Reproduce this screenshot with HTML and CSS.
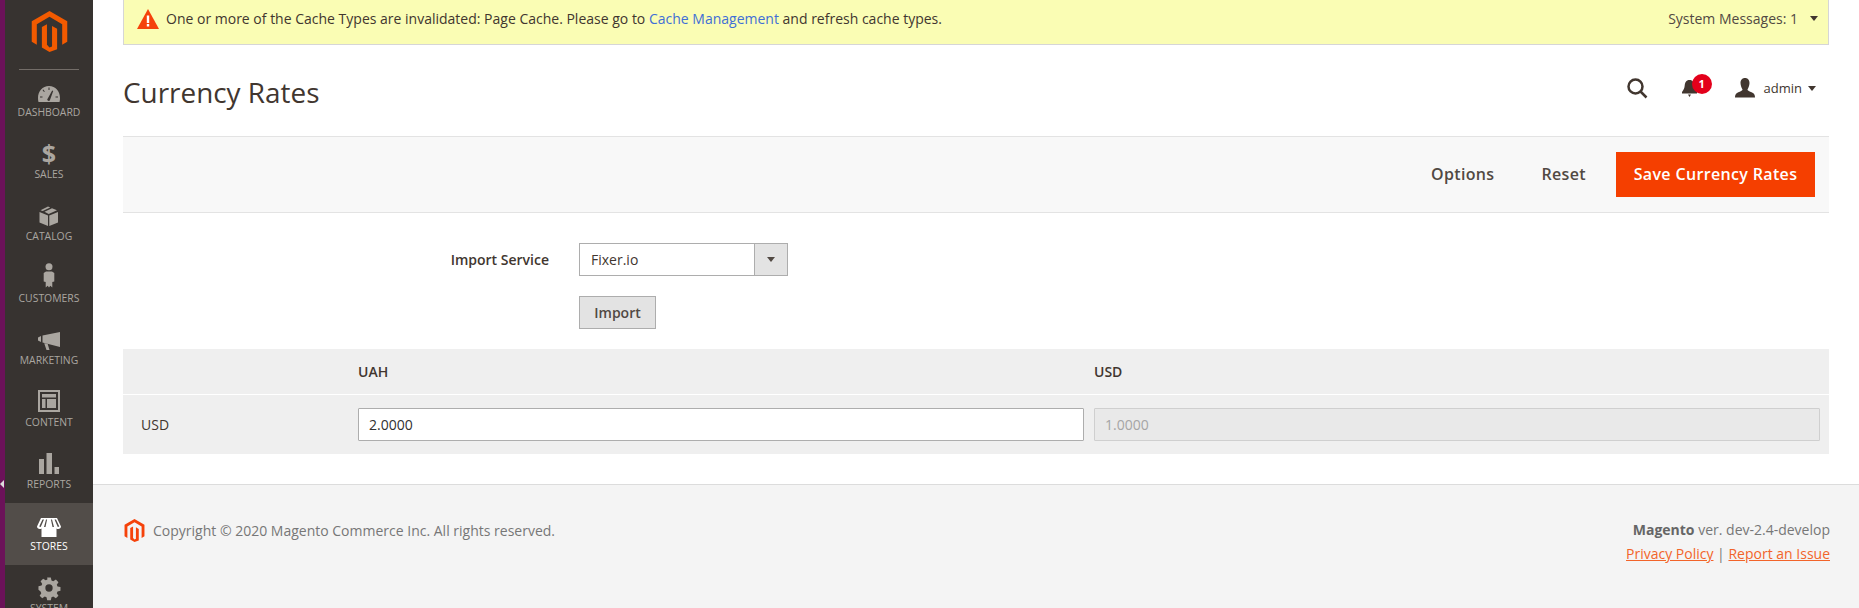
FILE: index.html
```html
<!DOCTYPE html>
<html lang="en">
<head>
<meta charset="utf-8">
<title>Currency Rates</title>
<link rel="stylesheet" href="styles.css">
</head>
<body>
<div class="strip"><span class="strip-arrow"></span></div>
<nav class="sidebar">
  <div class="logo">
    <svg class="logo-icon" viewBox="0 0 24 24"><path d="M12 24l-4.455-2.572v-12l2.97-1.715v12.001L12 21.43l1.485-.716V8.713l2.97 1.715v12L12 24zM22.391 6v12l-2.969 1.714V7.713L12 3.43 4.574 7.713v12.001L1.609 18V6L12 0l10.391 6z"/></svg>
  </div>
  <ul class="menu">
    <li class="menu-item">
      <svg class="nav-icon" viewBox="0 0 24 24"><path fill-rule="evenodd" d="M12 7C5.500 7 1 12 1 19c0 1.500.2 3 .5 4h21c.3-1 .5-2.500.5-4 0-7-4.500-12-11-12zM10.200 20.500l5-9 1 .5-3.400 9.500a1.600 1.600 0 0 1-2.600-1zM11.500 8.500h1V11h-1zM5.500 11l.8-.6 1.500 2-.8.6zM3 17.500h2.500v1H3zM18.500 17.500H21v1h-2.500z"/></svg>
      <span>Dashboard</span>
    </li>
    <li class="menu-item">
      <span class="dollar">$</span>
      <span>Sales</span>
    </li>
    <li class="menu-item">
      <svg class="nav-icon" viewBox="0 0 24 24"><path d="M2.500 9l8.500 3.500V23l-8.500-3.500zM21 9l-8.700 3.500V23l8.700-3.500zM3.500 7.200L11 3.500l2.200 1L5.700 8.100zM7.500 8.800L15 5.300l5 2-8.300 3.600z"/></svg>
      <span>Catalog</span>
    </li>
    <li class="menu-item">
      <svg class="nav-icon" viewBox="0 0 24 24"><circle cx="12" cy="1.800" r="3.500"/><path d="M9 6.500h6l2.300 1.500v8.500l-2 .5v5.500l-2-1.800-1.300 1.800-1.300-1.800-2 1.800V17l-2-.5V8z"/></svg>
      <span>Customers</span>
    </li>
    <li class="menu-item">
      <svg class="nav-icon" viewBox="0 0 24 24"><path d="M1 10.500l3-1.500v6l-3-1.500zM5.500 8.500L23 5v15L5.500 15.500zM7.200 16.200l3.500.8L12.500 23h-3z"/></svg>
      <span>Marketing</span>
    </li>
    <li class="menu-item">
      <svg class="nav-icon" viewBox="0 0 24 24"><path fill-rule="evenodd" d="M1 1h22v22H1zM3 3v18h18V3zM5 5h14v3.500H5zM5 10h3.500v9H5zM10 10h9v9h-9z"/></svg>
      <span>Content</span>
    </li>
    <li class="menu-item">
      <svg class="nav-icon" viewBox="0 0 24 24"><path d="M2 8h5v15H2zM9.500 2h5.500v21H9.500zM17.500 16H22v7h-4.500z"/></svg>
      <span>Reports</span>
    </li>
    <li class="menu-item is-active">
      <svg class="nav-icon" viewBox="0 0 24 24"><path fill-rule="evenodd" d="M4 5h16l4 8.500c0 1.500-1.300 2.500-2.700 2.500-.8 0-1.400-.2-1.800-.6V24h-15v-8.600c-.4.400-1 .6-1.800.6C1.300 16 0 15 0 13.500zM5.500 6.500l-3.300 7 1.500.5 3.300-7.500zM9 6.500l-2 7.500h1.500l1.600-7.500zM13.900 6.500l1.600 7.500H17l-2-7.500zM17.500 6.500l3.300 7.500 1.500-.5-3.300-7z"/></svg>
      <span>Stores</span>
    </li>
    <li class="menu-item">
      <svg class="nav-icon" viewBox="0 0 24 24"><path transform="translate(1 2) scale(.917)" fill-rule="evenodd" d="M10 .5h4l.7 3.300 1.900.8 2.900-1.800 2.800 2.800-1.800 2.900.8 1.900 3.200.6v4l-3.200.7-.8 1.900 1.800 2.800-2.800 2.800-2.900-1.800-1.900.8-.7 3.200h-4l-.7-3.200-1.900-.8-2.800 1.800-2.800-2.800 1.800-2.800-.8-1.900L.5 14v-4l3.300-.6.800-1.900-1.800-2.900 2.800-2.800 2.800 1.800 1.900-.8zM12 8a4 4 0 1 0 0 8 4 4 0 0 0 0-8z"/></svg>
      <span>System</span>
    </li>
  </ul>
</nav>
<div class="main">
  <div class="message">
    <div class="message-text">
      <svg class="warn" viewBox="0 0 22 20"><path d="M11 0l11 20H0z"/><rect class="warn-mark" x="9.800" y="6.500" width="2.400" height="7.500"/><rect class="warn-mark" x="9.800" y="15" width="2.400" height="2.500"/></svg>
      <span>One or more of the Cache Types are invalidated: Page Cache. Please go to <a class="msg-link" href="#">Cache Management</a> and refresh cache types.</span>
    </div>
    <div class="message-toggle">System Messages: 1<span class="caret"></span></div>
  </div>
  <header class="page-head">
    <h1 class="title">Currency Rates</h1>
    <div class="head-actions">
      <svg class="search" viewBox="0 0 21 21"><circle cx="8.500" cy="8.500" r="7" /><path d="M13.500 13.500l6 6"/></svg>
      <div class="bell-wrap">
        <svg class="bell" viewBox="0 0 16 18"><path d="M8 1c3.500 0 4.500 2.500 4.800 5.500.2 2.500.8 4 2.700 6.500v1.500H.5V13c1.900-2.500 2.500-4 2.700-6.500C3.500 3.500 4.500 1 8 1zM6.500 15.500h3L8 18z"/></svg>
        <span class="badge">1</span>
      </div>
      <div class="user">
        <svg class="user-icon" viewBox="0 0 20 20"><path d="M10 0c3 0 4.500 2.300 4.500 5S13 10.500 12.500 11.500c0 1.500 3 2 5.500 3.500 1.300.8 2 2.500 2 4.500H0c0-2 .7-3.700 2-4.500 2.500-1.500 5.500-2 5.500-3.500C7 10.500 5.500 7.700 5.500 5S7 0 10 0z"/></svg>
        <span class="user-name">admin</span>
        <span class="caret"></span>
      </div>
    </div>
  </header>
  <div class="action-bar">
    <button class="action" type="button">Options</button>
    <button class="action" type="button">Reset</button>
    <button class="action primary" type="button">Save Currency Rates</button>
  </div>
  <form class="import-form">
    <div class="form-row">
      <label class="form-label">Import Service</label>
      <div class="select"><span class="select-value">Fixer.io</span><span class="select-arrow"><span class="caret small"></span></span></div>
    </div>
    <div class="form-row import-row">
      <span class="form-label"></span>
      <button class="import-btn" type="button">Import</button>
    </div>
  </form>
  <div class="rates">
    <div class="rates-row head">
      <span></span><span>UAH</span><span>USD</span>
    </div>
    <div class="rates-row body">
      <span class="cur">USD</span>
      <input class="rate-input" type="text" value="2.0000">
      <input class="rate-input disabled" type="text" value="1.0000" disabled>
    </div>
  </div>
  <footer class="footer">
    <div class="copyright">
      <svg class="foot-logo" viewBox="0 0 24 24"><path d="M12 24l-4.455-2.572v-12l2.97-1.715v12.001L12 21.43l1.485-.716V8.713l2.97 1.715v12L12 24zM22.391 6v12l-2.969 1.714V7.713L12 3.430 4.574 7.713v12.001L1.609 18V6L12 0l10.391 6z"/></svg>
      <span>Copyright © 2020 Magento Commerce Inc. All rights reserved.</span>
    </div>
    <div class="foot-right">
      <div><strong>Magento</strong> ver. dev-2.4-develop</div>
      <div class="foot-links"><a href="#">Privacy Policy</a> <span class="sep">|</span> <a href="#">Report an Issue</a></div>
    </div>
  </footer>
</div>
</body>
</html>
```
FILE: styles.css
```css
* { box-sizing: border-box; }
html, body { height: 608px; }
body {
  margin: 0;
  display: flex;
  overflow: hidden;
  font-family: "Open Sans", sans-serif;
  font-size: 14px;
  color: #41362f;
  background: #fff;
}
.strip {
  width: 5px;
  flex: none;
  background: #6b1259;
  position: relative;
}
.strip-arrow {
  position: absolute;
  left: 0;
  top: 480px;
  border: 4px solid transparent;
  border-left: 0;
  border-right: 4px solid #ddd;
}
.sidebar {
  width: 88px;
  flex: none;
  background: #373330;
  height: 608px;
  overflow: hidden;
  color: #aaa6a0;
}
.logo {
  height: 69px;
  padding-top: 11px;
  display: flex;
  justify-content: center;
  align-items: flex-start;
  position: relative;
}
.logo::after {
  content: "";
  position: absolute;
  left: 14px;
  right: 14px;
  top: 69px;
  height: 1px;
  background: #736d68;
}
.logo-icon { width: 41px; height: 41px; fill: #f25a00; }
.menu { list-style: none; margin: 0; padding: 0; }
.menu-item {
  height: 62px;
  display: flex;
  flex-direction: column;
  align-items: center;
  justify-content: flex-start;
  padding-top: 10px;
  font-size: 10.4px;
  line-height: 16px;
  text-transform: uppercase;
}
.menu-item.is-active { background: #524d49; color: #fff; }
.nav-icon { width: 24px; height: 24px; fill: currentColor; display: block; margin-bottom: 1px; overflow: visible; }
.dollar {
  display: block;
  height: 25px;
  font-size: 25px;
  line-height: 25px;
  font-weight: 700;
}
.main {
  flex: 1;
  min-width: 0;
  display: flex;
  flex-direction: column;
  padding: 0 30px;
  height: 608px;
}
.message {
  height: 45px;
  flex: none;
  background: #fafdb4;
  border: 1px solid #d6d6d6;
  border-top: 0;
  display: flex;
  align-items: center;
  justify-content: space-between;
  padding: 0 10px 7px 13px;
  color: #41362f;
}
.message-text { display: flex; align-items: center; gap: 7px; }
.warn { width: 22px; height: 20px; fill: #f5420a; flex: none; }
.warn-mark { fill: #fff; }
.msg-link { text-decoration: none; color: #3f6fd6; }
.message-toggle { display: flex; align-items: center; gap: 12px; color: #514943; }
.caret {
  display: inline-block;
  width: 0;
  height: 0;
  border: 4px solid transparent;
  border-top: 5px solid #41362f;
  border-bottom: 0;
}
.caret.small { border-top-color: #514943; }
.page-head {
  height: 91px;
  flex: none;
  display: flex;
  align-items: center;
  justify-content: space-between;
  padding-top: 3px;
}
.title { margin: 0; font-size: 27.9px; font-weight: 400; color: #41362f; line-height: 36px; }
.head-actions { display: flex; align-items: center; padding: 0 13px 8px 0; }
.search { width: 21px; height: 21px; fill: none; stroke: #41362f; stroke-width: 2.500; display: block; margin-right: 33px; }
.bell-wrap { position: relative; width: 17px; height: 18px; margin-right: 37px; }
.bell { width: 17px; height: 18px; fill: #41362f; display: block; }
.badge {
  position: absolute;
  left: 11px;
  top: -5px;
  width: 20px;
  height: 20px;
  border-radius: 50%;
  background: #e3001b;
  color: #fff;
  font-size: 11px;
  font-weight: 700;
  line-height: 20px;
  text-align: center;
}
.user { display: flex; align-items: center; }
.user-icon { width: 20px; height: 20px; fill: #41362f; margin-right: 9px; display: block; }
.user-name { font-size: 13px; margin-right: 6px; }
.action-bar {
  height: 77px;
  flex: none;
  background: #f8f8f8;
  border-top: 1px solid #e3e3e3;
  border-bottom: 1px solid #e3e3e3;
  display: flex;
  align-items: center;
  justify-content: flex-end;
  padding-right: 14px;
}
.action {
  font: 600 16px/22px "Open Sans", sans-serif;
  letter-spacing: .35px;
  background: none;
  border: 0;
  color: #514943;
  padding: 0 0 2px;
  margin-right: 47px;
}
.action:nth-child(2) { margin-right: 30px; }
.action.primary {
  margin: 0;
  width: 199px;
  height: 45px;
  background: #f53f00;
  color: #fff;
}
.import-form { padding-top: 30px; flex: none; }
.form-row { display: flex; align-items: center; height: 33px; }
.import-row { margin-top: 20px; }
.form-label { width: 426px; text-align: right; font-weight: 600; margin-right: 30px; flex: none; }
.select {
  width: 209px;
  height: 33px;
  border: 1px solid #adadad;
  display: flex;
  align-items: center;
  justify-content: space-between;
  background: #fff;
}
.select-value { padding-left: 11px; }
.select-arrow {
  width: 33px;
  height: 31px;
  background: #e3e3e3;
  border-left: 1px solid #adadad;
  display: flex;
  align-items: center;
  justify-content: center;
}
.import-btn {
  width: 77px;
  height: 33px;
  background: #e3e3e3;
  border: 1px solid #adadad;
  color: #514943;
  font: 600 14px/20px "Open Sans", sans-serif;
  padding: 0;
}
.rates { margin-top: 20px; flex: none; background: #efefef; }
.rates-row {
  display: grid;
  grid-template-columns: 207px 1fr 1fr;
  column-gap: 10px;
  padding: 0 9px 0 18px;
  align-items: center;
}
.rates-row.head {
  height: 46px;
  font-weight: 600;
  border-bottom: 1px solid #fff;
  padding-bottom: 1px;
}
.rates-row.body { height: 59px; }
.rate-input {
  height: 33px;
  width: 100%;
  border: 1px solid #adadad;
  padding: 0 10px;
  font: 400 14px "Open Sans", sans-serif;
  color: #303030;
  background: #fff;
  border-radius: 1px;
}
.rate-input.disabled { background: #e9e9e9; border-color: #cfcfcf; color: #a5a5a5; }
.footer {
  flex: 1;
  margin: 30px -30px 0;
  padding: 27px 29px 0 30px;
  background: #f4f4f4;
  border-top: 1px solid #dcdcdc;
  display: flex;
  justify-content: space-between;
  align-items: flex-start;
  color: #777;
}
.copyright { display: flex; align-items: center; gap: 7px; padding-top: 7px; }
.foot-logo { width: 23px; height: 23px; fill: #f5420a; }
.foot-right { text-align: right; padding-top: 6px; line-height: 24px; }
.foot-right strong { color: #666; }
.foot-links a { color: #f2642a; }
.sep { color: #777; }
```
